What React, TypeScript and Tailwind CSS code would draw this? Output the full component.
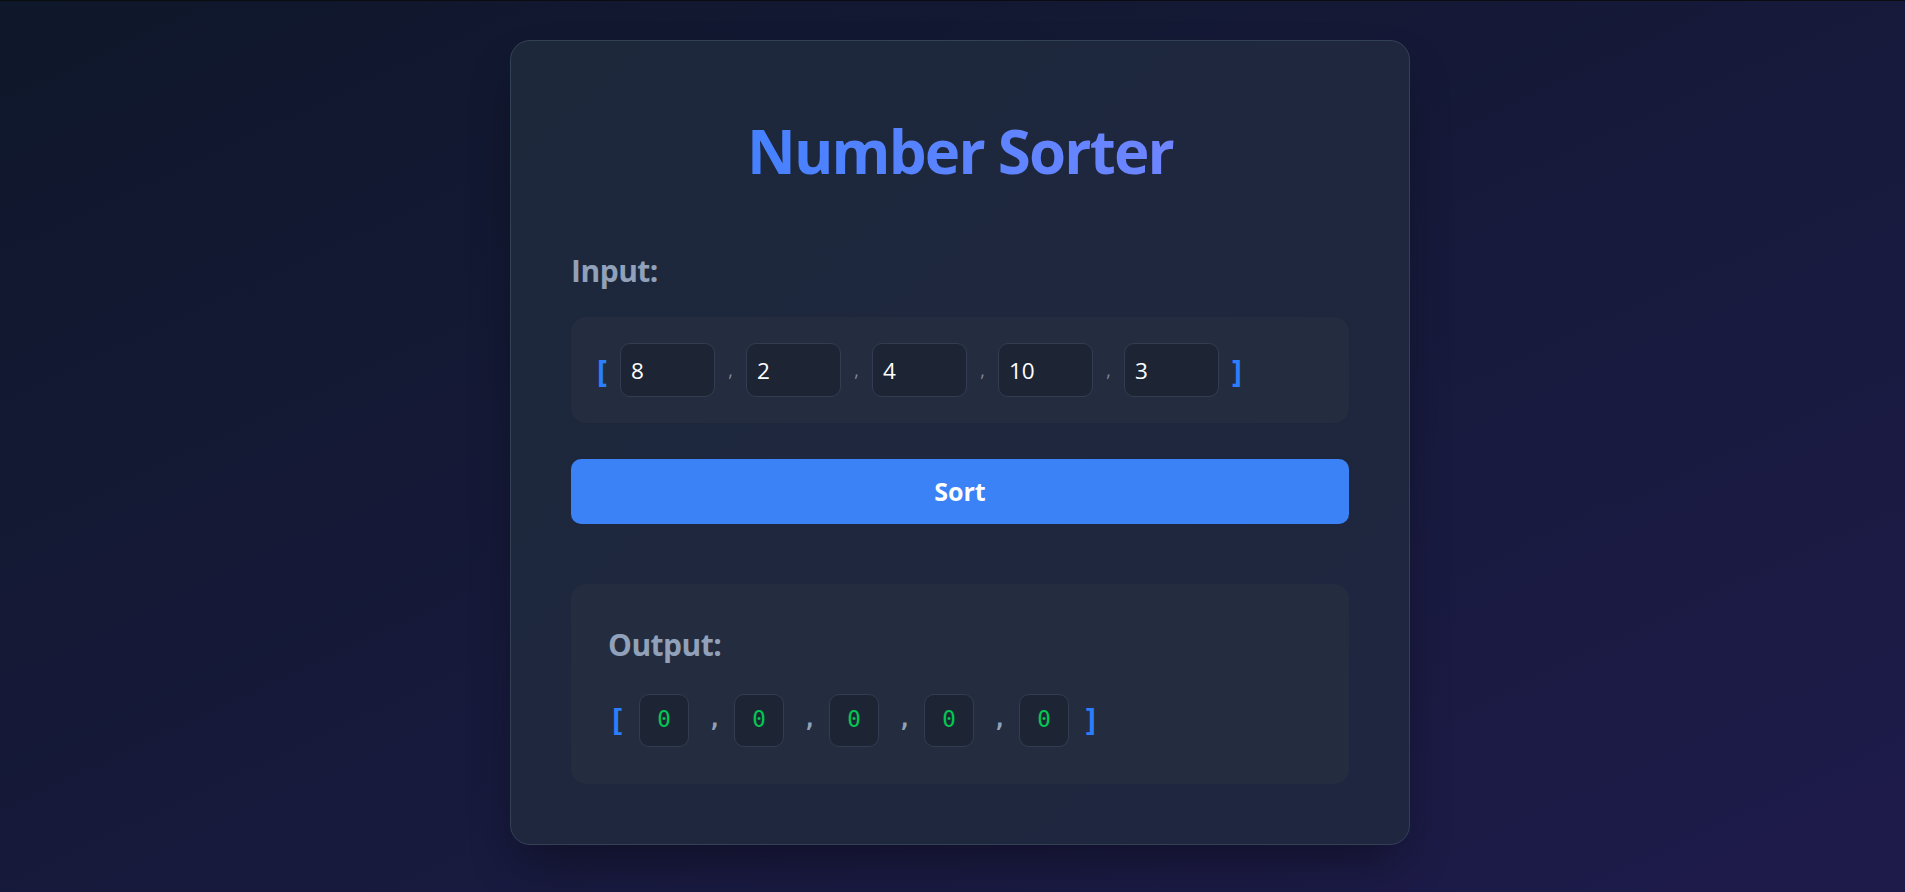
import React from "react";

const inputs = [8, 2, 4, 10, 3];
const outputs = [0, 0, 0, 0, 0];

const App: React.FC = () => {
  return (
    <div className="min-h-screen w-full border-t border-[#0b0c10] bg-linear-to-br from-[#0f172a] to-[#1e1b4b] pl-[15px] pt-[39px] pb-[47px] font-['Open_Sans',sans-serif]">
      <div className="mx-auto w-[900px] rounded-[20px] border border-[#334155] bg-linear-to-br from-[#1d283b] to-[#1f2640] p-[60px] shadow-2xl shadow-black/40">
        <h1 className="mt-[20px] bg-linear-to-r from-blue-500 to-indigo-400 bg-clip-text text-center text-[60px] font-bold leading-[60px] tracking-[-1.8px] text-transparent">
          Number Sorter
        </h1>

        <h2 className="mt-[67px] text-[30px] font-bold leading-[45px] tracking-[-0.5px] text-slate-400">Input:</h2>
        <div className="mt-[24px] flex items-center gap-[12px] rounded-[15px] bg-[#242c40] px-[25px] py-[26px]">
          <span className="w-[12px] text-center text-[30px] font-bold leading-[45px] text-blue-500">[</span>
          {inputs.map((n, i) => (
            <React.Fragment key={i}>
              <input
                type="text"
                defaultValue={n}
                className="h-[54px] w-[95px] rounded-[10px] border border-[#323d52] bg-[#1d2535] px-[10px] text-[22.5px] text-white outline-none"
              />
              {i < inputs.length - 1 && (
                <span className="w-[7px] text-center text-[17.5px] leading-[24px] text-[#7c8aa0]">,</span>
              )}
            </React.Fragment>
          ))}
          <span className="w-[12px] text-center text-[30px] font-bold leading-[45px] text-blue-500">]</span>
        </div>

        <button className="mt-[36px] h-[65px] w-full rounded-[10px] bg-[#3b82f6] text-[25px] font-bold text-white">
          Sort
        </button>

        <div className="mt-[60px] rounded-[15px] bg-[#242c40] px-[37px] py-[37.5px]">
          <h2 className="text-[30px] font-bold leading-[45px] tracking-[-0.5px] text-slate-400">Output:</h2>
          <div className="mt-[27px] flex items-center gap-[13px] font-['DejaVu_Sans_Mono',monospace]">
            <span className="w-[18px] text-center text-[30px] font-bold leading-[45px] text-blue-500">[</span>
            {outputs.map((n, i) => (
              <React.Fragment key={i}>
                <div className="flex h-[53px] w-[50px] items-center justify-center rounded-[10px] border border-[#323d52] bg-[#1d2535] text-[22.5px] text-green-500">
                  {n}
                </div>
                {i < outputs.length - 1 && (
                  <span className="w-[19px] pl-[6px] text-center text-[22.5px] font-bold text-slate-400">,</span>
                )}
              </React.Fragment>
            ))}
            <span className="w-[18px] text-center text-[30px] font-bold leading-[45px] text-blue-500">]</span>
          </div>
        </div>
      </div>
    </div>
  );
};

export default App;
